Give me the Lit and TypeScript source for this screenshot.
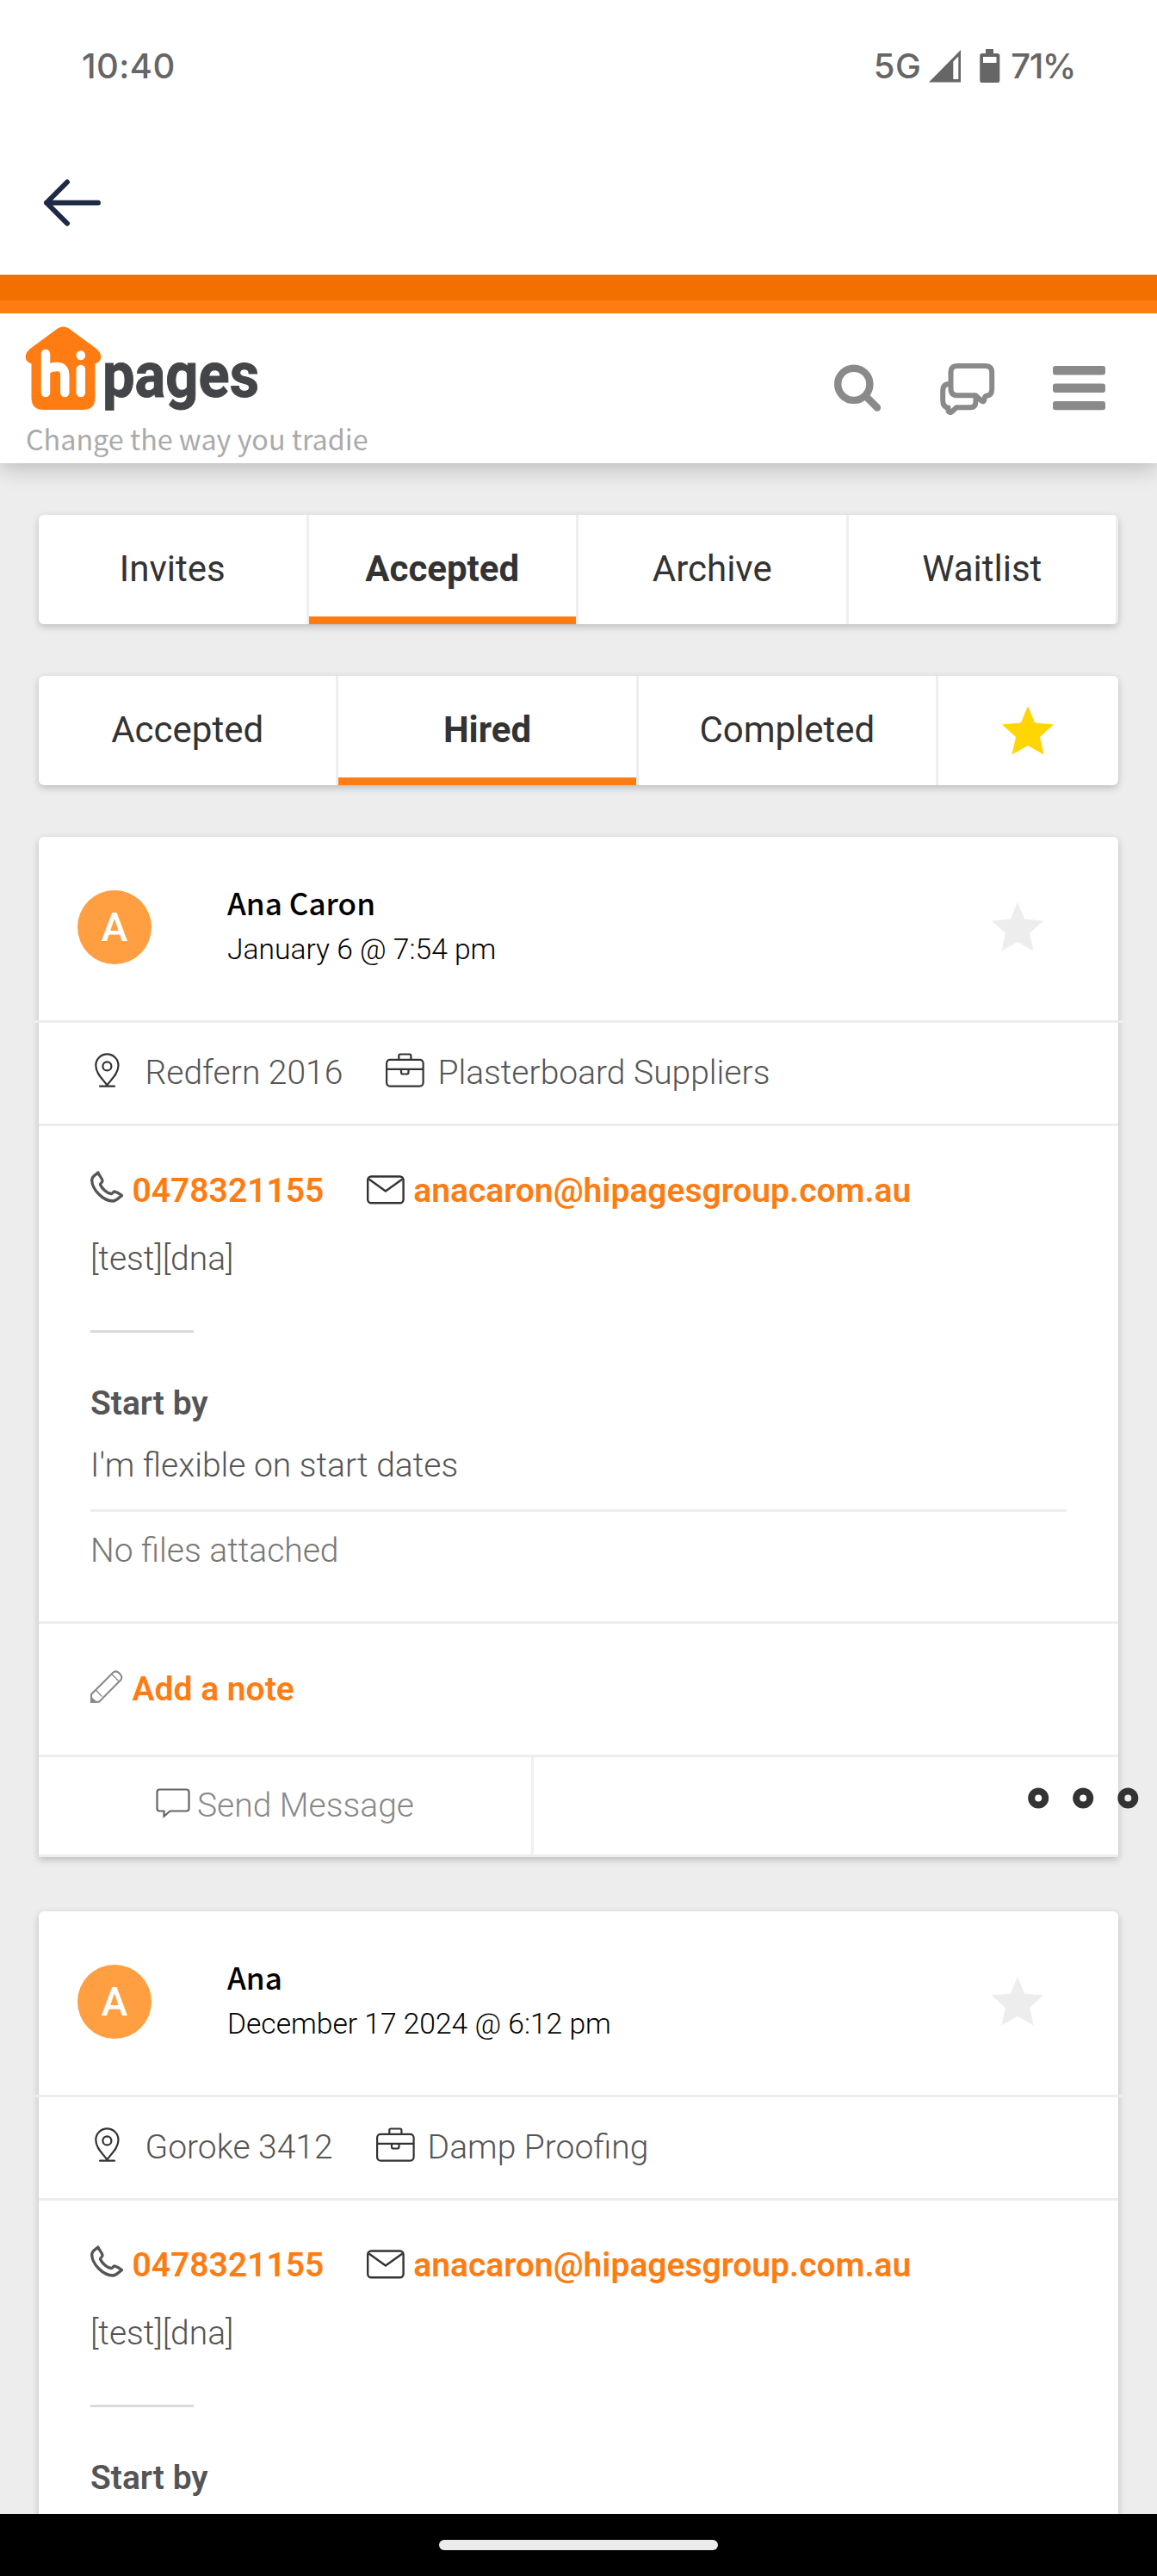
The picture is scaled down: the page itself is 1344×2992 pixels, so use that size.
import { LitElement, html, svg, css } from "lit";
import { customElement, property } from "lit/decorators.js";
import { classMap } from "lit/directives/class-map.js";

interface Lead {
  name: string;
  date: string;
  suburb: string;
  trade: string;
  phone: string;
  email: string;
  description: string;
}

const LEADS: Lead[] = [
  {
    name: "Ana Caron",
    date: "January 6 @ 7:54 pm",
    suburb: "Redfern 2016",
    trade: "Plasterboard Suppliers",
    phone: "0478321155",
    email: "anacaron@hipagesgroup.com.au",
    description: "[test][dna]",
  },
  {
    name: "Ana",
    date: "December 17 2024 @ 6:12 pm",
    suburb: "Goroke 3412",
    trade: "Damp Proofing",
    phone: "0478321155",
    email: "anacaron@hipagesgroup.com.au",
    description: "[test][dna]",
  },
];

const starShape = svg`<path d="M30 0L38.2 19.4L60 21.4L44 36L48.6 56.6L30 46L11.4 56.6L16 36L0 21.4L21.8 19.4Z" fill="currentColor" />`;

@customElement("status-bar")
export class StatusBar extends LitElement {
  static styles = css`
    :host {
      display: flex;
      justify-content: space-between;
      height: 154px;
      box-sizing: border-box;
      padding: 51px 95px 0 95px;
      font-family: Inter, Roboto, sans-serif;
      font-weight: 500;
      font-size: 40px;
      line-height: 52px;
      color: #666;
    }
    .right {
      display: flex;
    }
    .time {
      letter-spacing: 0.4px;
    }
    .net {
      letter-spacing: 0.5px;
    }
    .battery {
      letter-spacing: -1.5px;
    }
    svg {
      display: block;
    }
  `;
  render() {
    return html`
      <span class="time">10:40</span>
      <span class="right">
        <span class="net">5G</span>
        <svg width="104" height="52" viewBox="0 0 104 52">
          <path fill-rule="evenodd" d="M9 44.5L46 7V44.500ZM37.300 20.500V41H43.300V14.500Z" fill="#666" />
          <path
            fill-rule="evenodd"
            d="M75 6h9v5h4.500q2.800 0 2.800 2.800v28.400q0 2.800-2.800 2.800h-17.500q-2.800 0-2.800-2.800v-28.400q0-2.800 2.800-2.800h4zM72 15v7h15.500v-7z"
            fill="#666"
          />
        </svg>
        <span class="battery">71%</span>
      </span>
    `;
  }
}

@customElement("site-header")
export class SiteHeader extends LitElement {
  static styles = css`
    :host {
      display: block;
      position: relative;
      background: #fff;
      box-shadow: 0 6px 24px rgba(0, 0, 0, 0.22);
      clip-path: inset(0 0 -60px 0);
    }
    .bar {
      display: flex;
      justify-content: space-between;
      height: 174px;
      box-sizing: border-box;
      padding: 15px 60px 0 30px;
    }
    .brand {
      display: flex;
      flex-direction: column;
    }
    .tagline {
      font-family: "Noto Sans CJK SC", "Noto Sans", sans-serif;
      font-size: 32.3px;
      line-height: 50px;
      margin-top: 7px;
      color: #aaa;
      white-space: nowrap;
    }
    .actions {
      display: flex;
      padding-top: 43px;
      color: #8a8a8a;
    }
    .actions svg {
      display: block;
    }
    .chat {
      margin-left: 69px;
    }
    .menu {
      margin-left: 67px;
    }
    .logo {
      display: block;
      overflow: visible;
    }
    .word {
      font-family: Roboto, sans-serif;
      font-weight: 700;
    }
  `;
  render() {
    return html`
      <div class="bar">
        <div class="brand">
          <svg class="logo" width="272" height="98" viewBox="0 0 272 98">
            <path
              d="M37 2.500Q43.500 -1.500 50 2.500L82 26Q90 33 86 40Q84 42.500 80.500 43.500V83Q80.500 97 66 97H21Q6.500 97 6.500 83V43.500Q3 42.500 1 40Q-3 33 5 26Z"
              fill="#ff7c13"
            />
            <g fill="none" stroke="#fff" stroke-width="10.500" stroke-linecap="round" stroke-linejoin="round">
              <path d="M23 32V77M23 51Q30 46.500 37 47Q45.300 47.500 45.300 57V77" />
              <path d="M63.800 50V77M63.800 34V33.500" />
            </g>
            <text class="word" x="89" y="81.500" font-size="75" textLength="182" lengthAdjust="spacingAndGlyphs" fill="#434549" stroke="#434549" stroke-width="1">
              pages
            </text>
          </svg>
          <span class="tagline">Change the way you tradie</span>
        </div>
        <div class="actions">
          <svg width="54" height="60" viewBox="0 0 54 60" fill="none" stroke="currentColor">
            <circle cx="22.800" cy="24.300" r="18.600" stroke-width="8.400" />
            <path d="M37 38.500L50 51.500" stroke-width="8.400" stroke-linecap="round" />
          </svg>
          <svg class="chat" width="64" height="62" viewBox="0 0 64 62" fill="none" stroke="currentColor" stroke-width="6" stroke-linejoin="round">
            <path d="M19.500 3H53Q60.200 3 60.200 10.500V30Q60.200 37.500 53.500 37.800Q51.500 38.500 51.500 42Q50.500 46 47.500 43L41.500 37.300H20Q12.500 37.300 12.500 29.500V10.500Q12.500 3 19.500 3Z" />
            <path d="M12 23.800Q3.200 23.800 3.200 32V43Q3.200 51 9.500 51.500V55.500Q11 58.500 14 56L19 51.300H35Q41.500 51.300 41.500 44V37.500" />
          </svg>
          <svg class="menu" width="61" height="60" viewBox="0 0 61 60" fill="currentColor">
            <rect y="3" width="61" height="10.500" rx="3" />
            <rect y="23.500" width="61" height="10.500" rx="3" />
            <rect y="44" width="61" height="10.300" rx="3" />
          </svg>
        </div>
      </div>
    `;
  }
}

@customElement("tab-strip")
export class TabStrip extends LitElement {
  @property({ attribute: false }) tabs: string[] = [];
  @property() active = "";
  @property({ type: Boolean }) starred = false;

  static styles = css`
    :host {
      display: flex;
      height: 127px;
      background: #fff;
      border-radius: 6px;
      overflow: hidden;
      color: #333;
      font-size: 42px;
      box-shadow: 0 3px 9px rgba(0, 0, 0, 0.21);
    }
    .tab {
      flex: 1 1 0;
      display: flex;
      align-items: center;
      justify-content: center;
      border-right: 3px solid #eee;
      box-sizing: border-box;
      padding-bottom: 2px;
    }
    .active {
      font-weight: 700;
      box-shadow: inset 0 -9px #ff7c13;
    }
    .star {
      flex: 0 0 209px;
      display: flex;
      align-items: center;
      justify-content: center;
      box-sizing: border-box;
      padding-bottom: 1px;
      color: #ffd504;
    }
  `;
  render() {
    return html`
      ${this.tabs.map(
        (tab) => html`<div class=${classMap({ tab: true, active: tab === this.active })}>${tab}</div>`
      )}
      ${this.starred
        ? html`<div class="star"><svg width="60" height="57" viewBox="0 0 60 57">${starShape}</svg></div>`
        : null}
    `;
  }
}

@customElement("lead-card")
export class LeadCard extends LitElement {
  @property({ attribute: false }) lead!: Lead;

  static styles = css`
    :host {
      display: block;
      background: #fff;
      border-radius: 6px 6px 0 0;
      box-shadow: 0 3px 9px rgba(0, 0, 0, 0.21);
      color: #555;
      font-size: 39px;
      font-weight: 300;
      line-height: 60px;
      white-space: nowrap;
    }
    svg {
      display: block;
      flex: none;
    }
    .head {
      display: flex;
      align-items: center;
      height: 213px;
      box-sizing: border-box;
      padding: 0 87px 3px 45px;
      color: #000;
    }
    .avatar {
      width: 86px;
      height: 86px;
      border-radius: 50%;
      background: #ff9f42;
      color: #fff;
      font-size: 46px;
      font-weight: 500;
      line-height: 86px;
      text-align: center;
    }
    .who {
      flex: 1;
      margin-left: 88px;
      padding-bottom: 3px;
    }
    .name {
      font-family: "Noto Sans CJK SC", "Noto Sans", sans-serif;
      font-weight: 500;
      font-size: 35.1px;
      line-height: 50px;
    }
    .date {
      font-size: 33.6px;
      line-height: 50px;
      margin-top: 5px;
    }
    .star {
      color: #ededed;
      margin-bottom: 2px;
    }
    .meta {
      display: flex;
      align-items: center;
      height: 117px;
      padding-left: 60px;
      border-bottom: 3px solid #ededed;
    }
    .meta span {
      margin-bottom: 2px;
    }
    .wide-rule {
      height: 3px;
      margin: 0 -6px;
      background: #ededed;
    }
    .trade-icon {
      margin-left: 50px;
    }
    .body {
      padding: 45px 60px 52px;
      border-bottom: 3px solid #ededed;
    }
    .contact {
      display: flex;
      height: 60px;
    }
    .link {
      color: #ff7c13;
      font-weight: 600;
    }
    .mail-icon {
      margin-left: 50px;
    }
    .description {
      margin-top: 19px;
    }
    .short-rule {
      width: 120px;
      height: 3px;
      margin-top: 53px;
      background: #dadada;
    }
    .label {
      margin-top: 52px;
      font-weight: 600;
    }
    .answer {
      margin-top: 12px;
    }
    .rule {
      height: 3px;
      margin-top: 21px;
      background: #ededed;
    }
    .files {
      margin-top: 15px;
      color: #777;
    }
    .note {
      display: flex;
      align-items: center;
      height: 152px;
      padding-left: 60px;
      border-bottom: 3px solid #ededed;
    }
    .foot {
      position: relative;
      display: flex;
      height: 113px;
      border-bottom: 3px solid #ededed;
    }
    .send {
      display: flex;
      align-items: center;
      justify-content: center;
      width: 572px;
      border-right: 3px solid #f0f0f0;
      color: #888;
    }
    .send span {
      margin-bottom: 2px;
    }
    .dots {
      position: absolute;
      left: 1149px;
      top: 35px;
    }
  `;
  render() {
    const l = this.lead;
    return html`
      <div class="head">
        <div class="avatar">${l.name[0]}</div>
        <div class="who">
          <div class="name">${l.name}</div>
          <div class="date">${l.date}</div>
        </div>
        <svg class="star" width="60" height="57" viewBox="0 0 60 57">${starShape}</svg>
      </div>
      <div class="wide-rule"></div>
      <div class="meta">
        <svg width="63.500" height="60" viewBox="0 0 63.500 60" fill="none" stroke="#333" stroke-width="2.200" stroke-linejoin="round" stroke-linecap="round">
          <path d="M19.400 43.500C14 36 6.300 29.500 6.300 20.500A13.100 13.100 0 0 1 32.500 20.500C32.500 29.500 24.800 36 19.400 43.500Z" />
          <circle cx="19.400" cy="21.400" r="5" />
          <path d="M11 44.700H28" />
        </svg>
        <span>${l.suburb}</span>
        <svg class="trade-icon" width="60" height="60" viewBox="0 0 60 60" fill="none" stroke="#333" stroke-width="2.200">
          <rect x="1.100" y="13.800" width="42.500" height="30.800" rx="4" />
          <path d="M15.300 13.500V9.500Q15.300 7.500 17 7.500H27.700Q29.400 7.500 29.400 9.500V13.500M1.100 24.800H43.600M18 25V28.500Q18 30.500 20 30.500H24.500Q26.500 30.500 26.500 28.500V25" />
        </svg>
        <span>${l.trade}</span>
      </div>
      <div class="body">
        <div class="contact">
          <svg width="48.500" height="60" viewBox="0 0 48.500 60" fill="none" stroke="#555" stroke-width="3.300" stroke-linejoin="round">
            <path d="M8.800 9C6 12 1.700 12.500 1.700 18C2 28 14 42 26.500 42C31 41.500 33 38 36.500 35.600C34 33.500 31 31.500 27.800 30.800C26.500 30.800 26.300 34 24 33.500C19 33 13.500 27.500 11.500 23C11.500 20.500 14.300 21 14 18.500C13.500 15 10.500 13 8.800 9Z" />
          </svg>
          <span class="link">${l.phone}</span>
          <svg class="mail-icon" width="54" height="60" viewBox="0 0 54 60" fill="none" stroke="#333" stroke-width="2.400">
            <rect x="1.200" y="13.500" width="41.400" height="30.700" rx="4" />
            <path d="M2.500 16.500L21.900 30.500L41.500 16.500" />
          </svg>
          <span class="link">${l.email}</span>
        </div>
        <div class="description">${l.description}</div>
        <div class="short-rule"></div>
        <div class="label">Start by</div>
        <div class="answer">I'm flexible on start dates</div>
        <div class="rule"></div>
        <div class="files">No files attached</div>
      </div>
      <div class="note">
        <svg width="48.500" height="60" viewBox="0 0 48.500 60" fill="none" stroke="#888" stroke-width="2">
          <path d="M1 44.700V36L26.500 10.500Q30 8 33 11L35 13Q37.500 16.500 35.500 19L10 44.700Z" />
          <path d="M6.700 31.500L13.500 38.500M25 12.700L32.500 20.300" stroke-width="1.300" />
          <path d="M1 40L6 44.700H1Z" fill="#888" />
        </svg>
        <span class="link">Add a note</span>
      </div>
      <div class="foot">
        <div class="send">
          <svg width="48" height="60" viewBox="0 0 48 60" fill="none" stroke="#666" stroke-width="2.200">
            <path d="M4.500 10.500H35.500Q38.500 10.500 38.500 13.500V32.500Q38.500 35.500 35.500 35.500H16.500L9.500 41.500V35.500H4.500Q1.500 35.500 1.500 32.500V13.500Q1.500 10.500 4.500 10.500Z" />
          </svg>
          <span>Send Message</span>
        </div>
        <svg class="dots" width="129" height="26" viewBox="0 0 129 26" fill="none" stroke="#333" stroke-width="8">
          <circle cx="12.200" cy="12.600" r="8" />
          <circle cx="64.200" cy="12.600" r="8" />
          <circle cx="116.300" cy="12.600" r="8" />
        </svg>
      </div>
    `;
  }
}

@customElement("app-root")
export class AppRoot extends LitElement {
  static styles = css`
    :host {
      display: flex;
      flex-direction: column;
      width: 1344px;
      height: 2992px;
      overflow: hidden;
      background: #ededed;
      font-family: Roboto, "Liberation Sans", sans-serif;
    }
    .top {
      background: #fff;
    }
    .back {
      display: flex;
      align-items: center;
      height: 165px;
      padding-left: 50px;
    }
    .strip-dark {
      height: 30px;
      background: #f26f00;
    }
    .strip {
      height: 15px;
      background: #ff7c13;
    }
    .content {
      flex: 1;
      min-height: 0;
      overflow: hidden;
      display: flex;
      flex-direction: column;
      padding: 60px 45px 0;
    }
    .content > * {
      flex: none;
    }
    .filters {
      margin-top: 60px;
    }
    .lead {
      margin-top: 60px;
    }
    .lead + .lead {
      margin-top: 63px;
    }
    .nav {
      flex: none;
      position: relative;
      height: 72px;
      box-sizing: border-box;
      padding-top: 30px;
      background: #000;
    }
    .pill {
      width: 324px;
      height: 12px;
      margin: 0 auto;
      border-radius: 6px;
      background: #ebebeb;
    }
  `;
  render() {
    return html`
      <div class="top">
        <status-bar></status-bar>
        <div class="back">
          <svg width="68" height="60" viewBox="0 0 68 60" fill="none" stroke="#1f2b45" stroke-width="6" stroke-linecap="round" stroke-linejoin="round">
            <path d="M64 28.500H4M28 4.500L4 28.500L28 52.500" />
          </svg>
        </div>
        <div class="strip-dark"></div>
        <div class="strip"></div>
      </div>
      <site-header></site-header>
      <div class="content">
        <tab-strip .tabs=${["Invites", "Accepted", "Archive", "Waitlist"]} active="Accepted"></tab-strip>
        <tab-strip class="filters" .tabs=${["Accepted", "Hired", "Completed"]} active="Hired" starred></tab-strip>
        ${LEADS.map((lead) => html`<lead-card class="lead" .lead=${lead}></lead-card>`)}
      </div>
      <div class="nav"><div class="pill"></div></div>
    `;
  }
}
